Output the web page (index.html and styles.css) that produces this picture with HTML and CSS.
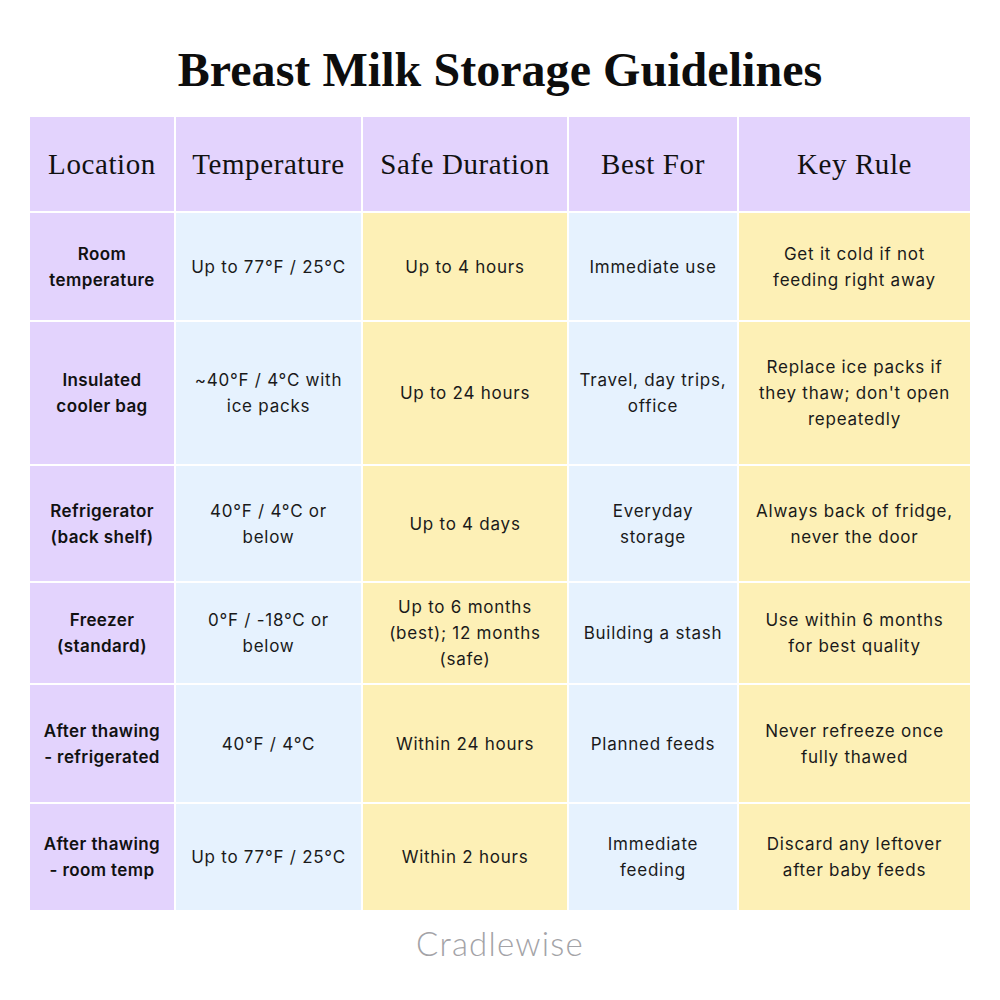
FILE: index.html
```html
<!DOCTYPE html>
<html>
<head>
<meta charset="utf-8">
<link rel="stylesheet" href="styles.css">
</head>
<body>
<div class="page">
  <h1 class="title">Breast Milk Storage Guidelines</h1>
  <div class="table">
    <div class="cell head">Location</div>
    <div class="cell head">Temperature</div>
    <div class="cell head">Safe Duration</div>
    <div class="cell head">Best For</div>
    <div class="cell head">Key Rule</div>

    <div class="cell loc">Room<br>temperature</div>
    <div class="cell blue">Up to 77°F / 25°C</div>
    <div class="cell yellow">Up to 4 hours</div>
    <div class="cell blue">Immediate use</div>
    <div class="cell yellow">Get it cold if not<br>feeding right away</div>

    <div class="cell loc">Insulated<br>cooler bag</div>
    <div class="cell blue">~40°F / 4°C with<br>ice packs</div>
    <div class="cell yellow">Up to 24 hours</div>
    <div class="cell blue">Travel, day trips,<br>office</div>
    <div class="cell yellow">Replace ice packs if<br>they thaw; don't open<br>repeatedly</div>

    <div class="cell loc">Refrigerator<br>(back shelf)</div>
    <div class="cell blue">40°F / 4°C or<br>below</div>
    <div class="cell yellow">Up to 4 days</div>
    <div class="cell blue">Everyday<br>storage</div>
    <div class="cell yellow">Always back of fridge,<br>never the door</div>

    <div class="cell loc">Freezer<br>(standard)</div>
    <div class="cell blue">0°F / -18°C or<br>below</div>
    <div class="cell yellow">Up to 6 months<br>(best); 12 months<br>(safe)</div>
    <div class="cell blue">Building a stash</div>
    <div class="cell yellow">Use within 6 months<br>for best quality</div>

    <div class="cell loc">After thawing<br>- refrigerated</div>
    <div class="cell blue">40°F / 4°C</div>
    <div class="cell yellow">Within 24 hours</div>
    <div class="cell blue">Planned feeds</div>
    <div class="cell yellow">Never refreeze once<br>fully thawed</div>

    <div class="cell loc">After thawing<br>- room temp</div>
    <div class="cell blue">Up to 77°F / 25°C</div>
    <div class="cell yellow">Within 2 hours</div>
    <div class="cell blue">Immediate<br>feeding</div>
    <div class="cell yellow">Discard any leftover<br>after baby feeds</div>
  </div>
  <div class="brand">Cradlewise</div>
</div>
</body>
</html>
```

FILE: styles.css
```css
html, body {
  margin: 0;
  padding: 0;
  background: #ffffff;
}
.page {
  width: 940px;
  margin: 0 auto;
  display: flex;
  flex-direction: column;
  align-items: stretch;
}
.title {
  margin: 0;
  height: 117px;
  box-sizing: border-box;
  padding-top: 43px;
  font-family: "Liberation Serif", serif;
  font-weight: 700;
  font-size: 48px;
  line-height: 54px;
  text-align: center;
  color: #0d0d0d;
  letter-spacing: 0.05px;
}
.table {
  display: grid;
  grid-template-columns: 144px 185px 204px 168px 231px;
  grid-template-rows: 94px 107px 142px 115px 100px 117px 106px;
  gap: 2px;
}
.cell {
  display: flex;
  align-items: center;
  justify-content: center;
  text-align: center;
  font-family: Inter, "Noto Sans", sans-serif;
  font-size: 17px;
  line-height: 26px;
  color: #1a1a1a;
  letter-spacing: 0.75px;
}
.head {
  background: #e3d3fd;
  font-family: "Liberation Serif", serif;
  font-size: 29px;
  color: #111;
  letter-spacing: 0.6px;
}
.loc {
  background: #e3d3fd;
  font-weight: 600;
  color: #111;
  letter-spacing: 0.4px;
}
.blue {
  background: #e6f2fe;
}
.yellow {
  background: #fdf0b6;
}
.brand {
  margin-top: 13px;
  text-align: center;
  font-family: Lato, "Noto Sans", sans-serif;
  font-weight: 300;
  font-size: 33px;
  line-height: 40px;
  color: #a3a3a7;
  letter-spacing: 1.2px;
}
```
